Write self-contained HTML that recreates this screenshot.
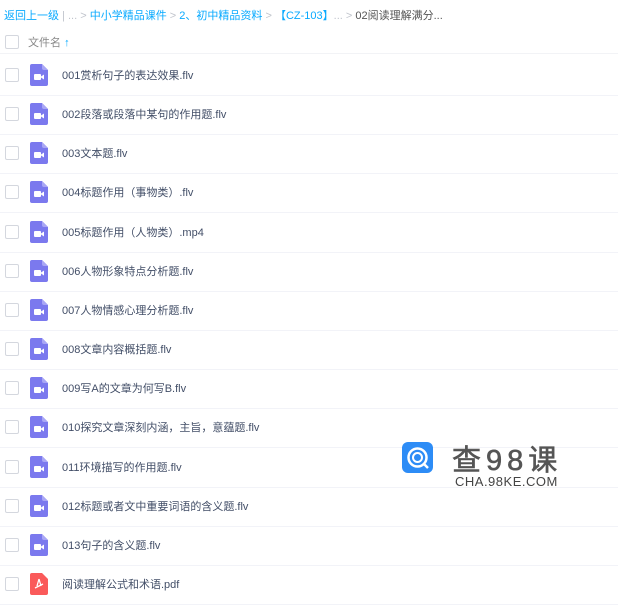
<!DOCTYPE html>
<html><head><meta charset="utf-8"><style>
body{margin:0;width:618px;height:600px;background:#fff;font-family:"Liberation Sans","Noto Sans CJK SC",sans-serif;overflow:hidden;position:relative}
.bc{position:absolute;left:4px;top:7px;font-size:11px;color:#09aaff;white-space:nowrap}
.bc .g{color:#c0c4cc}.bc .d{color:#555}
.hd{position:absolute;left:0;top:30px;width:618px;height:23px;border-bottom:1px solid #f2f3f6}
.cb{position:absolute;left:5px;width:12px;height:12px;border:1px solid #d4d7de;border-radius:2px;background:#fff}
.hd span{position:absolute;left:28px;top:4px;font-size:11px;color:#888}
.row{position:absolute;left:0;width:618px;height:39px;border-bottom:1px solid #f2f3f8}
.row .cb{top:12px}
.ic{position:absolute;left:30px;top:8px;width:18px;height:22px}
.row .t{position:absolute;left:62px;top:11px;font-size:11px;color:#424e67;white-space:nowrap}
</style></head><body>
<div class="bc">返回上一级 <span class="g">|</span> <span class="g">...</span> <span class="g">&gt;</span> 中小学精品课件 <span class="g">&gt;</span> 2、初中精品资料 <span class="g">&gt;</span> 【CZ-103】<span class="g">... &gt;</span> <span class="d">02阅读理解满分...</span></div>
<div class="hd"><div class="cb" style="top:5px"></div><span>文件名 <b style="color:#09aaff">↑</b></span></div>
<div id="rows"></div>
<div style="position:absolute;left:402px;top:442px;width:31px;height:31px;border-radius:6px;background:#2d8cf6"></div>
<svg style="position:absolute;left:402px;top:442px" width="31" height="31"><circle cx="15.5" cy="15.5" r="9" fill="none" stroke="#fff" stroke-width="2.5"/><circle cx="15.5" cy="15.5" r="4.5" fill="none" stroke="#fff" stroke-width="2"/><path d="M22 22 L26 26" stroke="#fff" stroke-width="2.5"/></svg>
<div style="position:absolute;left:452px;top:437px;font-size:29px;color:#555;letter-spacing:5px;white-space:nowrap;-webkit-text-stroke:0.6px #555">查98课</div>
<div style="position:absolute;left:455px;top:474px;font-size:13px;color:#444;letter-spacing:0.5px">CHA.98KE.COM</div>
<script>
var n=["001赏析句子的表达效果.flv","002段落或段落中某句的作用题.flv","003文本题.flv","004标题作用（事物类）.flv","005标题作用（人物类）.mp4","006人物形象特点分析题.flv","007人物情感心理分析题.flv","008文章内容概括题.flv","009写A的文章为何写B.flv","010探究文章深刻内涵，主旨，意蕴题.flv","011环境描写的作用题.flv","012标题或者文中重要词语的含义题.flv","013句子的含义题.flv","阅读理解公式和术语.pdf"];
var h="";n.forEach(function(s,i){var y=56+i*39.15;var pdf=i==13;
var ic=pdf?'<svg class="ic" viewBox="0 0 18 22"><path d="M0 2a2 2 0 0 1 2-2h10l6 6v14a2 2 0 0 1-2 2H2a2 2 0 0 1-2-2z" fill="#fa5a5a"/><path d="M9 6 L7 13 M9 6 L11 13 M5 15 L13 11" stroke="#fff" stroke-width="1.3" fill="none"/></svg>':'<svg class="ic" viewBox="0 0 18 22"><path d="M0 2a2 2 0 0 1 2-2h10l6 6v14a2 2 0 0 1-2 2H2a2 2 0 0 1-2-2z" fill="#7b79ee"/><path d="M12 0v4a2 2 0 0 0 2 2h4z" fill="#a9a7f5"/><rect x="4" y="10" width="7" height="6" rx="1" fill="#fff"/><path d="M11 12.5 L14 10.5 V15.5 L11 13.5z" fill="#fff"/></svg>';
h+='<div class="row" style="top:'+y+'px"><div class="cb"></div>'+ic+'<div class="t">'+s+'</div></div>';});
document.getElementById("rows").innerHTML=h;
</script>
</body></html>
